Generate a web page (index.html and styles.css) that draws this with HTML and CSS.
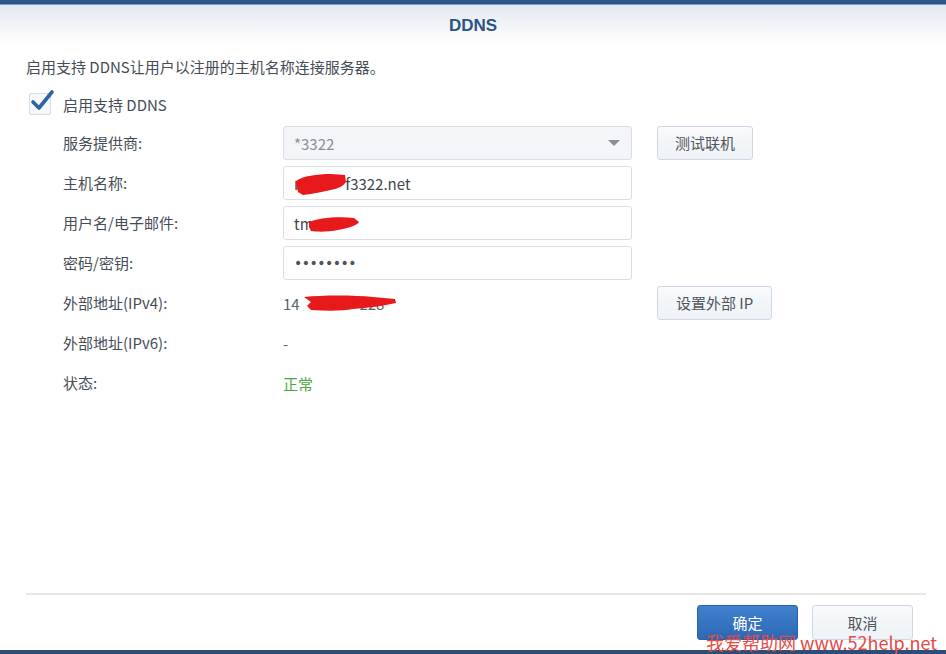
FILE: index.html
```html
<!DOCTYPE html>
<html lang="zh-CN">
<head>
    <meta charset="UTF-8">
    <meta name="viewport" content="width=device-width, initial-scale=1.0">
    <title>DDNS</title>
    <link rel="stylesheet" href="styles.css">
</head>
<body>
    <div class="dialog">
        <div class="topbar"></div>
        <div class="header">DDNS</div>

        <div class="content">
            <div class="desc">启用支持 DDNS让用户以注册的主机名称连接服务器。</div>

            <label class="check-row">
                <span class="checkbox">
                    <svg width="26" height="26" viewBox="0 0 26 26">
                        <path d="M4 14 L10 20 L23 4" fill="none" stroke="#2f63a3" stroke-width="3.6" stroke-linecap="round" stroke-linejoin="round"/>
                    </svg>
                </span>
                <span>启用支持 DDNS</span>
            </label>

            <div class="form">
                <div class="label">服务提供商:</div>
                <div class="field select">
                    <span>*3322</span>
                    <span class="arrow"></span>
                </div>
                <button class="btn">测试联机</button>

                <div class="label">主机名称:</div>
                <div class="field">
                    <span class="text">m<span class="gap">xxxxx</span>f3322.net</span>
                    <svg class="scribble s1" width="52" height="24" viewBox="0 0 52 24">
                        <path d="M1 9 C8 4 22 2 36 2 L50 3 L51 10 C48 14 44 16 40 17 C30 19 18 22 8 23 L3 20 C2 16 1 12 1 9 Z" fill="#e8191b"/>
                    </svg>
                </div>
                <div></div>

                <div class="label">用户名/电子邮件:</div>
                <div class="field">
                    <span class="text">tm</span>
                    <svg class="scribble s2" width="52" height="17" viewBox="0 0 52 17">
                        <path d="M1 6 C10 2 30 0 46 2 L51 6 C48 10 40 12 30 14 C20 16 10 16 3 15 L1 11 Z" fill="#e8191b"/>
                    </svg>
                </div>
                <div></div>

                <div class="label">密码/密钥:</div>
                <div class="field">
                    <span class="dots">••••••••</span>
                </div>
                <div></div>

                <div class="label">外部地址(IPv4):</div>
                <div class="value">
                    <span>14<span class="gap">xxxxxxxx</span>228</span>
                    <svg class="scribble s3" width="94" height="18" viewBox="0 0 94 18">
                        <path d="M1 3 C20 1 50 1 70 3 L92 5 L93 9 C80 12 66 14 50 15 C40 17 24 17 8 16 L4 12 L8 8 Z" fill="#e8191b"/>
                    </svg>
                </div>
                <button class="btn wide">设置外部 IP</button>

                <div class="label">外部地址(IPv6):</div>
                <div class="value">-</div>
                <div></div>

                <div class="label">状态:</div>
                <div class="value ok">正常</div>
                <div></div>
            </div>
        </div>

        <div class="footer">
            <div class="sep"></div>
            <div class="actions">
                <button class="btn primary">确定</button>
                <button class="btn">取消</button>
            </div>
        </div>

        <div class="watermark">我爱帮助网 www.52help.net</div>
        <div class="bottombar"></div>
    </div>
</body>
</html>
```

FILE: styles.css
```css
body {
    margin: 0;
    background: #ffffff;
    font-family: "Noto Sans CJK SC", "Noto Sans", sans-serif;
}
.dialog {
    position: relative;
    width: 946px;
    height: 654px;
    background: #ffffff;
    display: flex;
    flex-direction: column;
    color: #454d56;
    font-size: 15px;
    overflow: hidden;
}
.topbar {
    height: 4px;
    background: #2c5687;
    border-bottom: 1px solid #7f9fc6;
}
.header {
    height: 37px;
    background: linear-gradient(#e2e8f1, #ffffff);
    display: flex;
    justify-content: center;
    align-items: center;
    font-family: "Liberation Sans", Arial, sans-serif;
    font-weight: bold;
    font-size: 17px;
    color: #2b5383;
    padding-top: 2px;
}
.content {
    padding: 13px 26px 0 26px;
    flex: 1;
}
.desc {
    line-height: 20px;
    height: 20px;
}
.check-row {
    display: flex;
    align-items: center;
    gap: 12px;
    margin-top: 16px;
    margin-left: 3px;
    height: 22px;
}
.checkbox {
    position: relative;
    box-sizing: border-box;
    width: 22px;
    height: 22px;
    border: 1px solid #d6dce4;
    border-radius: 2px;
    background: #f6f8fa;
}
.checkbox svg {
    position: absolute;
    left: -1px;
    top: -6px;
}
.form {
    display: grid;
    grid-template-columns: 195px 349px auto;
    grid-auto-rows: 34px;
    row-gap: 6px;
    column-gap: 25px;
    margin-top: 11px;
    padding-left: 37px;
    align-items: center;
}
.label {
    line-height: 20px;
    white-space: nowrap;
}
.field {
    position: relative;
    box-sizing: border-box;
    height: 34px;
    border: 1px solid #d9dfe6;
    border-radius: 3px;
    background: #ffffff;
    display: flex;
    align-items: center;
    padding-left: 10px;
    color: #3f464e;
}
.select {
    background: #f3f5f8;
    color: #8a8f96;
    justify-content: space-between;
    padding-right: 11px;
}
.arrow {
    width: 0;
    height: 0;
    border-left: 6px solid transparent;
    border-right: 6px solid transparent;
    border-top: 6px solid #8a8f96;
}
.gap {
    color: transparent;
}
.dots {
    font-family: "DejaVu Sans", sans-serif;
    font-size: 14px;
    letter-spacing: -0.5px;
    color: #4a525b;
}
.scribble {
    position: absolute;
}
.s1 { left: 11px; top: 5px; }
.s2 { left: 24px; top: 9px; }
.s3 { left: 20px; top: 8px; }
.value {
    position: relative;
    height: 34px;
    display: flex;
    align-items: center;
    color: #5b636b;
}
.ok {
    color: #4ca83a;
}
.btn {
    box-sizing: border-box;
    height: 34px;
    padding: 0 17px;
    border: 1px solid #cfd8e2;
    border-radius: 3px;
    background: linear-gradient(#f8fafc, #eef2f6);
    font-family: "Noto Sans CJK SC", sans-serif;
    font-size: 15px;
    line-height: 20px;
    color: #50565c;
    justify-self: start;
}
.wide {
    padding: 0 18px;
}
.footer {
    padding: 0 20px 0 26px;
    height: 57px;
}
.sep {
    height: 2px;
    background: #e6e6e6;
}
.actions {
    display: flex;
    justify-content: flex-end;
    gap: 14px;
    margin-top: 10px;
    padding-right: 13px;
}
.actions .btn {
    width: 101px;
    height: 35px;
    padding: 0;
}
.primary {
    background: linear-gradient(#3f82cf, #2e67b3);
    border-color: #2a60a6;
    color: #ffffff;
}
.watermark {
    position: absolute;
    left: 706px;
    top: 633px;
    font-family: "Noto Sans CJK SC", sans-serif;
    font-size: 18px;
    line-height: 18px;
    color: #e54a44;
    white-space: nowrap;
}
.bottombar {
    height: 4px;
    background: #2d4d78;
}
```
